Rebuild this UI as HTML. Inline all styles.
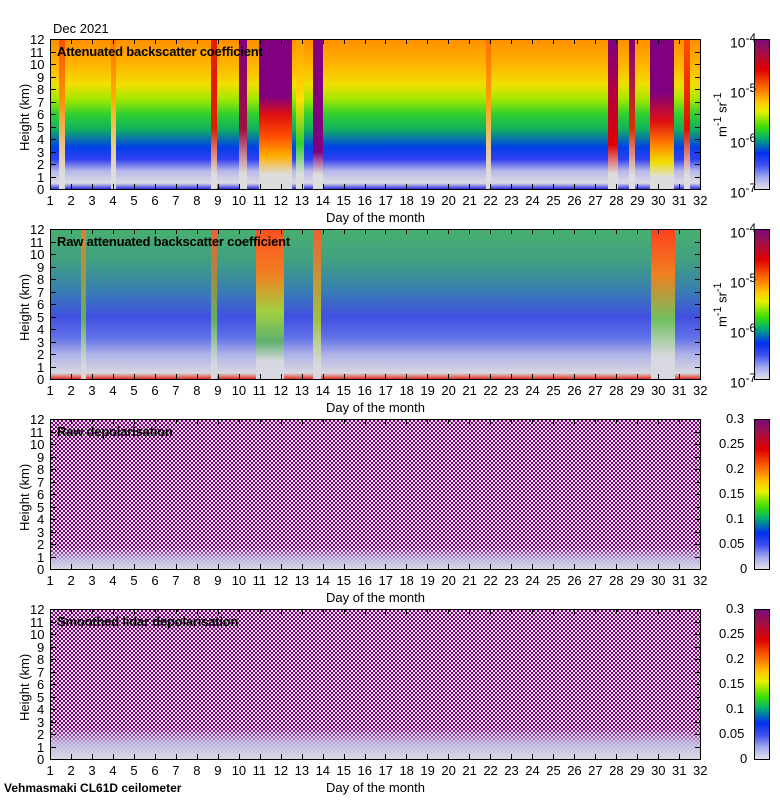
<!DOCTYPE html>
<html><head><meta charset="utf-8"><style>
*{margin:0;padding:0;box-sizing:border-box}
body{width:780px;height:800px;background:#fff;position:relative;overflow:hidden;font-family:"Liberation Sans",sans-serif;color:#000}
.a{position:absolute}
.plot{position:absolute;left:50px;width:651px;height:151px;border:1px solid #000;overflow:hidden}
.cb{position:absolute;left:754px;width:16px;height:151px;border:1px solid #000;background:linear-gradient(to bottom,#7a0a7a 0%,#a0104a 8%,#e00000 20%,#ff6a00 32%,#ffc800 42%,#e8f000 48%,#40e000 58%,#00b070 66%,#0030f0 76%,#4050f0 84%,#a0a8f0 92%,#e0e0ea 100%)}
.t{position:absolute;font-size:13px;line-height:13px;white-space:nowrap}
.yl{position:absolute;font-size:13px;transform:rotate(-90deg);transform-origin:left top;white-space:nowrap}
.title{position:absolute;left:6px;top:4px;font-size:13px;font-weight:bold;letter-spacing:-0.2px}
.s{position:absolute;top:0;bottom:0}
.noise{background-color:#b575b5;background-image:repeating-conic-gradient(#800080 0 25%,#dcdcdc 0 50%);background-size:4px 4px}
</style></head><body>
<div class="t" style="left:53px;top:22px">Dec 2021</div>

<!-- Panel 1 -->
<div class="plot" style="top:39px;background:linear-gradient(to bottom,#ff9000 0%,#ffb800 18%,#f0e000 30%,#a0e800 40%,#30d030 50%,#10b060 60%,#0040e8 72%,#3040f0 80%,#b8b8ea 88%,#dcdce4 96%,#3030e0 100%)">
  <div class="s" style="left:208px;width:33px;background:linear-gradient(to bottom,#800080 0%,#800080 38%,#e01010 50%,#ff5000 65%,#ffb000 78%,#dcdcdc 90%)"></div>
  <div class="s" style="left:262px;width:10px;background:linear-gradient(to bottom,#800080 0%,#800080 75%,#ddd 90%)"></div>
  <div class="s" style="left:188px;width:8px;background:linear-gradient(to bottom,#800080 0%,#a01040 60%,#ddd 90%)"></div>
  <div class="s" style="left:160px;width:6px;background:linear-gradient(to bottom,#e02000 0%,#e02000 60%,#ddd 90%)"></div>
  <div class="s" style="left:557px;width:10px;background:linear-gradient(to bottom,#800080 0%,#e00000 70%,#ddd 90%)"></div>
  <div class="s" style="left:578px;width:6px;background:linear-gradient(to bottom,#800080 0%,#e03000 60%,#ddd 90%)"></div>
  <div class="s" style="left:599px;width:24px;background:linear-gradient(to bottom,#800080 0%,#800080 35%,#e01010 55%,#ff8000 70%,#f0e000 82%,#ddd 92%)"></div>
  <div class="s" style="left:633px;width:6px;background:linear-gradient(to bottom,#ff5000 0%,#e01000 60%,#ddd 90%)"></div>
  <div class="s" style="left:8px;width:6px;background:linear-gradient(to bottom,#ff5000 0%,#ff9000 40%,#ddd 90%)"></div>
  <div class="s" style="left:245px;width:8px;background:linear-gradient(to bottom,#ffa000 0%,#ffe000 40%,#30d030 70%,#ddd 90%)"></div>
  <div class="s" style="left:60px;width:5px;background:linear-gradient(to bottom,#ff7000 0%,#ffb000 40%,#ddd 90%)"></div>
  <div class="s" style="left:435px;width:5px;background:linear-gradient(to bottom,#ff7000 0%,#ffa000 40%,#ddd 90%)"></div>
  <div class="title">Attenuated backscatter coefficient</div>
</div>
<div class="cb" style="top:39px"></div>

<!-- Panel 2 -->
<div class="plot" style="top:229px;background:linear-gradient(to bottom,#48b070 0%,#40a080 20%,#3880b0 40%,#4050e0 58%,#6070e8 72%,#b0b4e8 84%,#d8d8e0 96%,#e03020 100%)">
  <div class="s" style="left:205px;width:28px;background:linear-gradient(to bottom,#ff5020 0%,#f08020 30%,#a0d040 55%,#60b070 75%,#d8d8e0 88%)"></div>
  <div class="s" style="left:600px;width:24px;background:linear-gradient(to bottom,#ff4020 0%,#f08020 30%,#70c060 60%,#d8d8e0 85%)"></div>
  <div class="s" style="left:262px;width:8px;background:linear-gradient(to bottom,#f06030 0%,#a0c040 60%,#d8d8e0 90%)"></div>
  <div class="s" style="left:160px;width:6px;background:linear-gradient(to bottom,#f06030 0%,#60b060 60%,#d8d8e0 90%)"></div>
  <div class="s" style="left:30px;width:5px;background:linear-gradient(to bottom,#e08030 0%,#60b060 60%,#d8d8e0 90%)"></div>
  <div class="title">Raw attenuated backscatter coefficient</div>
</div>
<div class="cb" style="top:229px"></div>

<!-- Panel 3 -->
<div class="plot noise" style="top:419px">
  <div class="s" style="left:0;right:0;top:auto;height:22px;bottom:0;background:linear-gradient(to bottom,rgba(200,200,230,0) 0%,rgba(200,200,235,.85) 60%,#d8d8e4 100%)"></div>
  <div class="title">Raw depolarisation</div>
</div>
<div class="cb" style="top:419px"></div>

<!-- Panel 4 -->
<div class="plot noise" style="top:609px">
  <div class="s" style="left:0;right:0;top:auto;height:30px;bottom:0;background:linear-gradient(to bottom,rgba(200,200,230,0) 0%,rgba(200,200,235,.85) 50%,#d8d8e4 100%)"></div>
  <div class="title">Smoothed lidar depolarisation</div>
</div>
<div class="cb" style="top:609px"></div>

<div id="ax"></div>
<div class="t" style="left:4px;top:782px;font-weight:bold;font-size:12px">Vehmasmaki CL61D ceilometer</div>

<script>
var ax=document.getElementById('ax'),h='';
var tops=[39,229,419,609];
var cbl=[['10<sup>-4</sup>','10<sup>-5</sup>','10<sup>-6</sup>','10<sup>-7</sup>'],['0.3','0.25','0.2','0.15','0.1','0.05','0']];
for(var p=0;p<4;p++){
 var T=tops[p],B=T+150;
 for(var k=0;k<=12;k++){var y=B-k*12.5;
  h+='<div class="t" style="left:'+(k>=10?30:37)+'px;top:'+(y-6)+'px">'+k+'</div>';
  h+='<div class="a" style="left:50px;top:'+y+'px;width:6px;height:1px;background:#000"></div>';
  h+='<div class="a" style="left:695px;top:'+y+'px;width:6px;height:1px;background:#000"></div>';}
 for(var d=1;d<=32;d++){var x=50+(d-1)*650/31;
  h+='<div class="t" style="left:'+(x-(d>=10?7:3.5))+'px;top:'+(B+5)+'px">'+d+'</div>';
  h+='<div class="a" style="left:'+x+'px;top:'+(B-5)+'px;width:1px;height:5px;background:#000"></div>';
  h+='<div class="a" style="left:'+x+'px;top:'+T+'px;width:1px;height:5px;background:#000"></div>';}
 h+='<div class="yl" style="left:17px;top:'+(T+112)+'px">Height (km)</div>';
 h+='<div class="t" style="left:326px;top:'+(B+22)+'px">Day of the month</div>';
 var L=cbl[p<2?0:1],n=L.length;
 for(var i=0;i<n;i++){var y=T+i*150/(n-1);
  h+='<div class="t" style="left:'+(p<2?730:(L[i].length>3?719:(L[i].length>1?726:740)))+'px;top:'+(y-7)+'px;font-size:'+(p<2?14:13)+'px">'+L[i]+'</div>';}
 if(p<2)h+='<div class="yl" style="left:712px;top:'+(T+98)+'px">m<sup>-1</sup> sr<sup>-1</sup></div>';
}
ax.innerHTML=h;
</script>
</body></html>
